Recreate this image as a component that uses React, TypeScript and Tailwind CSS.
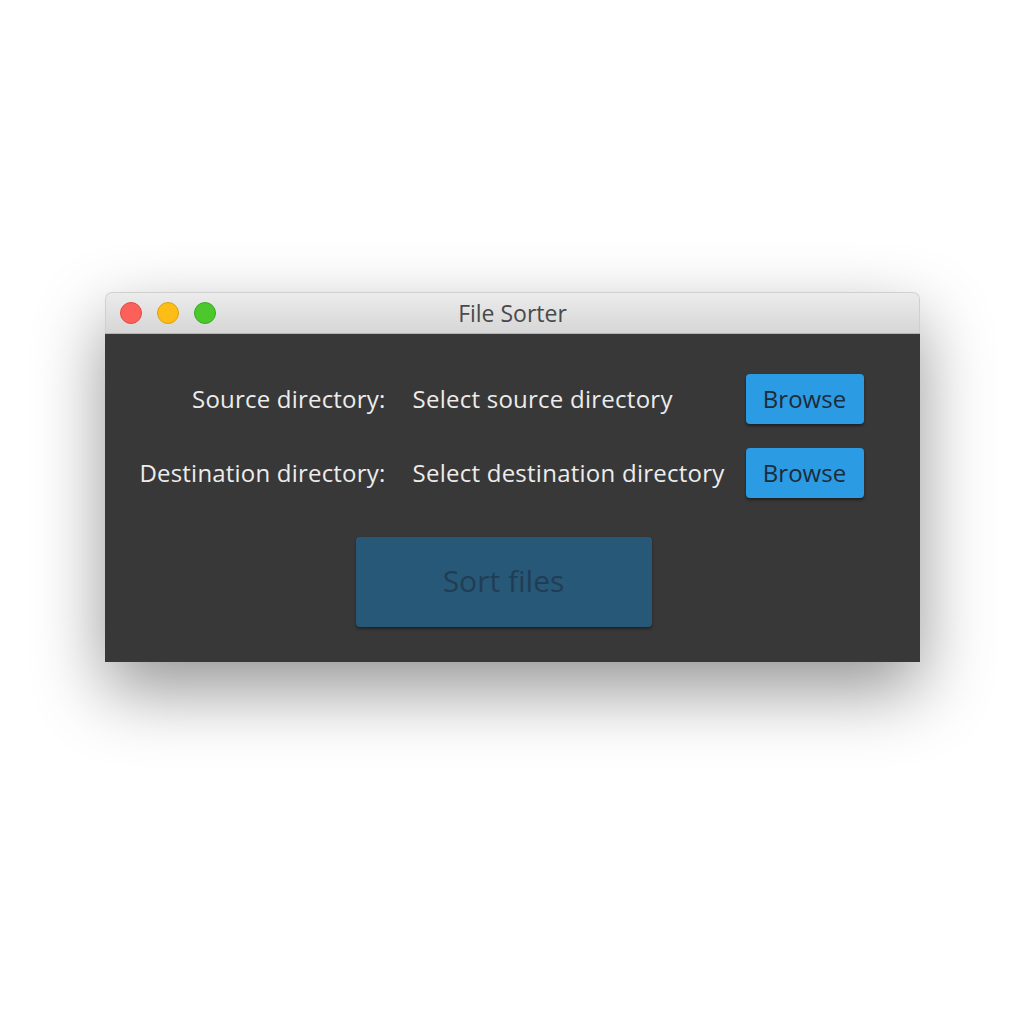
const rows = [
  { label: "Source directory:", value: "Select source directory" },
  { label: "Destination directory:", value: "Select destination directory" },
];

function TrafficLights() {
  return (
    <div className="absolute left-[14px] top-[9px] flex gap-[15px]">
      <span className="w-[22px] h-[22px] rounded-full bg-[#fb615a] border border-[#e2483f]" />
      <span className="w-[22px] h-[22px] rounded-full bg-[#fcbd17] border border-[#dea00c]" />
      <span className="w-[22px] h-[22px] rounded-full bg-[#4cc82d] border border-[#35ab1d]" />
    </div>
  );
}

export default function App() {
  return (
    <main
      className="w-[1024px] h-[1024px] bg-white flex justify-center pt-[292px]"
      style={{ fontFamily: "'Open Sans', 'Noto Sans', sans-serif" }}
    >
      <div className="w-[815px] h-[370px] flex flex-col rounded-t-[7px] shadow-[0_28px_70px_rgba(0,0,0,0.42)]">
        <header className="relative h-[41px] shrink-0 rounded-t-[7px] border border-b-0 border-[#d0d0d0] bg-gradient-to-b from-[#ececec] to-[#d6d6d6] flex items-center justify-center">
          <TrafficLights />
          <span className="text-[23px] font-medium text-[#4a4a4a] pl-[1px]">File Sorter</span>
        </header>
        <div className="h-px bg-[#b4b4b4]" />
        <section className="flex-1 bg-[#383838] flex flex-col pt-[40px]">
          <div className="grid grid-cols-[243px_360px_118px] gap-y-[24px] pl-[38px]">
            {rows.map(r => (
              <div key={r.label} className="contents">
                <div className="h-[50px] flex items-center justify-end text-[24px] tracking-[0.2px] text-[#ececec] whitespace-nowrap">
                  {r.label}
                </div>
                <div className="h-[50px] flex items-center pl-[27px] text-[24px] tracking-[0.25px] text-[#ececec] whitespace-nowrap">
                  {r.value}
                </div>
                <button className="h-[50px] rounded-[4px] bg-[#2b9be4] text-[24px] text-[#1c2b3a] shadow-[0_2px_3px_rgba(0,0,0,0.45)]">
                  Browse
                </button>
              </div>
            ))}
          </div>
          <div className="flex pl-[251px] mt-[39px]">
            <button className="w-[296px] h-[90px] pb-[4px] rounded-[4px] bg-[#285877] text-[30px] text-[#1f3e55] shadow-[0_2px_3px_rgba(0,0,0,0.4)]">
              Sort files
            </button>
          </div>
        </section>
      </div>
    </main>
  );
}
